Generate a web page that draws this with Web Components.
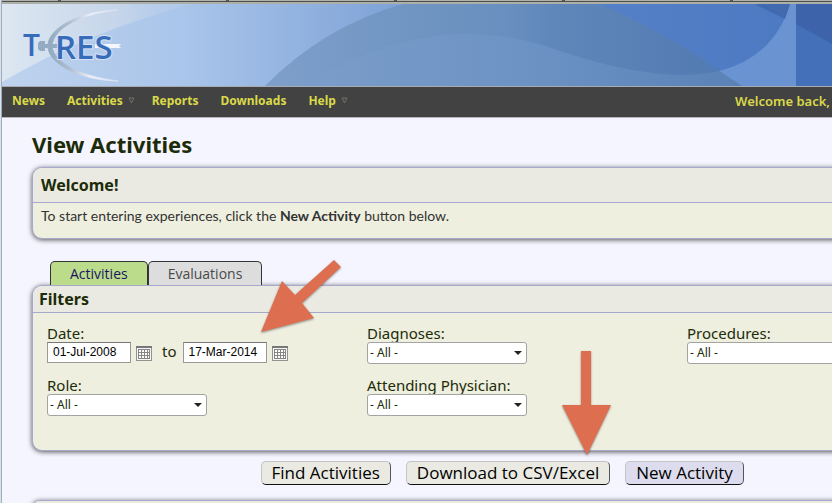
<!DOCTYPE html>
<html lang="en">
<head>
<meta charset="utf-8">
<title>View Activities</title>
<style>
  body {
    margin: 0;
    min-height: 100vh;
    overflow: hidden;
    background: #f4f5ff;
    color: #1c2b08;
    font-family: "Noto Sans", "Open Sans", sans-serif;
  }
</style>
</head>
<body>
<activities-page></activities-page>

<script type="module">
class TeresBanner extends HTMLElement {
  constructor() {
    super();
    this.attachShadow({ mode: 'open' });
    this.shadowRoot.innerHTML = `
      <style>
        :host {
          display: block;
          border-bottom: 1px solid #a9abb2;
        }
        .ticks {
          height: 1px;
          background: repeating-linear-gradient(90deg, #b0b1ab 0 56px, #555 56px 59px, #b0b1ab 59px 168px);
        }
        .edge {
          height: 2px;
          border-top: 1px solid #4d504c;
          background: #adb0a9;
        }
        svg { display: block; width: 100%; height: 82px; }
      </style>
      <div class="ticks"></div>
      <div class="edge"></div>
      <svg viewBox="0 0 832 82" preserveAspectRatio="xMinYMin slice" role="img" aria-label="TERES">
        <defs>
          <linearGradient id="sky">
            <stop offset="0" stop-color="#bfd3ee"/>
            <stop offset=".22" stop-color="#a9c5ea"/>
            <stop offset=".42" stop-color="#88aadb"/>
            <stop offset=".68" stop-color="#5a85ca"/>
            <stop offset="1" stop-color="#426fbb"/>
          </linearGradient>
          <linearGradient id="pale">
            <stop offset="0" stop-color="#dce7f1"/>
            <stop offset=".6" stop-color="#c6d5ea"/>
            <stop offset="1" stop-color="#abc6ea"/>
          </linearGradient>
          <linearGradient id="hill">
            <stop offset="0" stop-color="#7e9fca"/>
            <stop offset=".5" stop-color="#688fbe"/>
            <stop offset=".6" stop-color="#6087ba"/>
            <stop offset="1" stop-color="#5079b2"/>
          </linearGradient>
          <linearGradient id="dome">
            <stop offset="0" stop-color="#7b9dc9"/>
            <stop offset=".5" stop-color="#6d93c4"/>
            <stop offset="1" stop-color="#5a82b7"/>
          </linearGradient>
          <linearGradient id="arc">
            <stop offset="0" stop-color="#8fa9bf"/>
            <stop offset=".3" stop-color="#acbdd1"/>
            <stop offset=".6" stop-color="#e9edf7"/>
            <stop offset="1" stop-color="#d5dff1"/>
          </linearGradient>
        </defs>
        <rect width="832" height="82" fill="url(#sky)"/>
        <path d="M0 0H190Q85 28 0 78Z" fill="url(#pale)"/>
        <path d="M263 82Q322 22 401 0H597Q658 24 742 82Z" fill="url(#hill)"/>
        <path d="M300 82Q380 34 457 30Q510 29 555 46Q625 70 680 71Q702 70 717 67L740 82Z" fill="url(#dome)"/>
        <path d="M597 0H790Q772 53 717 67Q658 24 597 0Z" fill="#527fc4" opacity=".6"/>
        <path d="M717 67Q772 53 788 0H794V82H740Z" fill="#6994d1"/>
        <path d="M752 0H788L783 15Z" fill="#426aae"/>
        <path d="M794 0H832V82H794Z" fill="#4470b9"/>
        <path d="M794 0H832V41L794 20Z" fill="#3d64ab"/>
        <path d="M116 6C78 7 46 24 46 42C46 60 78 76 116 77C82 73 51 60 50 42C51 23 82 9 116 6Z" fill="url(#arc)" stroke="url(#arc)"/>
        <path d="M38 37h5v10h-5l-2-2v-6zM43 40h13v4H43z" fill="#94abc4"/>
        <path d="M93 40H119L117 42L119 44H93Z" fill="#f5f7fd"/>
        <g fill="#376cb9" stroke="#d5e0f5" stroke-width="2" paint-order="stroke" font-family="Open Sans, Noto Sans, sans-serif" font-weight="600">
          <text x="21" y="52" font-size="30">T</text>
          <text x="53" y="55" font-size="33">RES</text>
        </g>
      </svg>
    `;
  }
}
customElements.define('teres-banner', TeresBanner);

class TeresNav extends HTMLElement {
  constructor() {
    super();
    this.attachShadow({ mode: 'open' });
    this.shadowRoot.innerHTML = `
      <style>
        :host {
          display: block;
          background: #424242;
          border-bottom: 1px solid #b6b4bf;
        }
        nav {
          display: flex;
          align-items: center;
          height: 30px;
          padding: 0 2px 3px 10px;
          box-sizing: border-box;
          font-size: 12px;
          font-weight: 700;
          color: #d9d94a;
        }
        ul {
          display: flex;
          gap: 22px;
          margin: 0;
          padding: 0;
          list-style: none;
        }
        li { display: flex; align-items: center; gap: 5px; }
        a { color: inherit; text-decoration: none; }
        svg { width: 7px; height: 7px; margin-right: -5px; }
        .user { margin-left: auto; font-size: 13px; font-weight: 600; }
      </style>
      <nav>
        <ul>
          <li><a href="#news">News</a></li>
          <li><a href="#activities">Activities</a>${TeresNav.more}</li>
          <li><a href="#reports">Reports</a></li>
          <li><a href="#downloads">Downloads</a></li>
          <li><a href="#help">Help</a>${TeresNav.more}</li>
        </ul>
        <span class="user">Welcome back,</span>
      </nav>
    `;
  }

  static more = `<svg viewBox="0 0 7 7" aria-hidden="true">
    <path d="M1 1H6L3.500 6Z" fill="none" stroke="#77706b"/>
  </svg>`;
}
customElements.define('teres-nav', TeresNav);

class InfoPanel extends HTMLElement {
  constructor() {
    super();
    this.attachShadow({ mode: 'open' });
    this.shadowRoot.innerHTML = `
      <style>
        :host {
          display: block;
          border: 1px solid #a6a8cc;
          border-radius: 10px;
          background: #eeefdf;
          box-shadow: 0 1px 5px #555;
          overflow: hidden;
        }
        header {
          padding: var(--panel-head-padding, 6px 8px);
          border-bottom: 1px solid #a6a8cc;
          background: #eaeae2;
          font-size: 16px;
          line-height: 22px;
          font-weight: 700;
        }
        ::slotted(h2) { margin: 0; font: inherit; }
      </style>
      <header><slot name="title"></slot></header>
      <slot></slot>
    `;
  }
}
customElements.define('info-panel', InfoPanel);

class TabStrip extends HTMLElement {
  constructor() {
    super();
    this.attachShadow({ mode: 'open' });
    this.shadowRoot.innerHTML = `
      <style>
        :host { display: flex; }
        ::slotted(button) {
          height: 24px;
          padding: 0 19px;
          border: 1px solid #333;
          border-bottom: 0;
          border-radius: 5px 5px 0 0;
          background: #ddd;
          color: #4a4a4a;
          font: 14px/22px "Open Sans", sans-serif;
        }
        ::slotted(button[aria-selected="true"]) {
          background: #badc8b;
          color: #1b1465;
        }
      </style>
      <slot></slot>
    `;
  }

  connectedCallback() {
    this.setAttribute('role', 'tablist');
  }
}
customElements.define('tab-strip', TabStrip);

class SelectField extends HTMLElement {
  constructor() {
    super();
    this.attachShadow({ mode: 'open' });
    this.shadowRoot.innerHTML = `
      <style>
        :host { display: block; }
        label { display: block; font-size: 15px; line-height: 18px; }
        .box { position: relative; width: 160px; }
        select {
          display: block;
          appearance: none;
          box-sizing: border-box;
          width: 100%;
          height: 22px;
          padding: 0 20px 1px 2px;
          border: 1px solid #a3a3a3;
          border-radius: 3px;
          background: #fff;
          color: #1c2b08;
          font: 12px "Noto Sans", sans-serif;
        }
        svg {
          position: absolute;
          right: 5px;
          top: 9px;
          width: 8px;
          height: 4px;
          pointer-events: none;
        }
      </style>
      <label for="choice"></label>
      <div class="box">
        <select id="choice"><option>- All -</option></select>
        <svg viewBox="0 0 8 4" aria-hidden="true"><path d="M0 0H8L4 4Z" fill="#222"/></svg>
      </div>
    `;
  }

  connectedCallback() {
    this.shadowRoot.querySelector('label').textContent = this.getAttribute('label');
  }
}
customElements.define('select-field', SelectField);

class DateRange extends HTMLElement {
  constructor() {
    super();
    this.attachShadow({ mode: 'open' });
    const calendar = `<svg viewBox="0 0 16 15" aria-hidden="true">
      <rect x=".5" y=".5" width="15" height="14" fill="#f6f6f3" stroke="#92928e"/>
      <path d="M0 1H16" stroke="#777" stroke-width="2"/>
      <rect x="2" y="3" width="12" height="10" fill="#858585"/>
      <path d="M3 4h2v2h-2zM6 4h2v2h-2zM9 4h2v2h-2zM12 4h1v2h-1zM3 7h2v2h-2zM6 7h2v2h-2zM9 7h2v2h-2zM12 7h1v2h-1zM3 10h2v2h-2zM6 10h2v2h-2zM9 10h2v2h-2zM12 10h1v2h-1z" fill="#fff"/>
    </svg>`;
    this.shadowRoot.innerHTML = `
      <style>
        :host { display: block; }
        label { display: block; font-size: 15px; line-height: 18px; }
        .range { display: flex; align-items: flex-start; height: 22px; }
        input {
          box-sizing: border-box;
          width: 84px;
          height: 21px;
          padding: 0 5px 1px;
          border: 1px solid #999;
          border-top-color: #777;
          background: #fff;
          color: #000;
          font: 12px "Liberation Sans", Arial, sans-serif;
        }
        button {
          display: flex;
          margin: 4px 0 0 5px;
          padding: 0;
          border: 0;
          background: none;
        }
        svg { width: 16px; height: 15px; }
        .to { margin: 0 6px 0 10px; }
      </style>
      <label for="from">Date:</label>
      <div class="range">
        <input id="from" value="01-Jul-2008">
        <button type="button" aria-label="Pick start date">${calendar}</button>
        <label class="to" for="until">to</label>
        <input id="until" value="17-Mar-2014">
        <button type="button" aria-label="Pick end date">${calendar}</button>
      </div>
    `;
  }
}
customElements.define('date-range', DateRange);

class ActionBar extends HTMLElement {
  constructor() {
    super();
    this.attachShadow({ mode: 'open' });
    this.shadowRoot.innerHTML = `
      <style>
        :host { display: flex; justify-content: center; gap: 15px; }
        ::slotted(button) {
          height: 24px;
          padding: 0 10px;
          border: 1px solid;
          border-color: #c4c4c4 #555 #111 #c4c4c4;
          border-radius: 5px;
          background: #eaeae2;
          color: #000;
          font: 17px/20px "Open Sans", sans-serif;
        }
        ::slotted(button.primary) { background: #dddcee; }
      </style>
      <slot></slot>
    `;
  }
}
customElements.define('action-bar', ActionBar);

class CalloutArrow extends HTMLElement {
  constructor() {
    super();
    this.attachShadow({ mode: 'open' });
    this.shadowRoot.innerHTML = `
      <style>
        :host { display: block; position: absolute; pointer-events: none; }
        svg { display: block; overflow: visible; filter: drop-shadow(0 1px 1px #0006); }
      </style>
      <svg aria-hidden="true"><path fill="#de6e50"/></svg>
    `;
  }

  connectedCallback() {
    const svg = this.shadowRoot.querySelector('svg');
    svg.setAttribute('width', this.getAttribute('width'));
    svg.setAttribute('height', this.getAttribute('height'));
    svg.querySelector('path').setAttribute('d', this.getAttribute('d'));
  }
}
customElements.define('callout-arrow', CalloutArrow);

class ActivitiesPage extends HTMLElement {
  constructor() {
    super();
    this.attachShadow({ mode: 'open' });
    this.shadowRoot.innerHTML = `
      <style>
        :host {
          display: block;
          position: relative;
          box-sizing: border-box;
          min-height: 100vh;
          border-left: 1px solid #d4e1ef;
        }
        .frame { border-left: 1px solid #a5adba; }
        /* the content is wider than the window and runs off its right edge */
        main { width: 121%; box-sizing: border-box; padding: 12px 34px 0 30px; }
        h1 { margin: 0 0 9px; font-size: 22px; line-height: 28px; }
        p {
          margin: 0;
          padding: 3px 8px 12px;
          font: 14px/20px Lato, "Open Sans", sans-serif;
          color: #333;
        }
        tab-strip { margin: 22px 0 0 18px; }
        .filters { --panel-head-padding: 2px 6px; }
        .fields {
          display: grid;
          grid-template-columns: repeat(3, 320px);
          gap: 12px 0;
          padding: 11px 14px 34px;
        }
        action-bar { margin: 10px 0 15px; }
        .dates { left: 259px; top: 260px; }
        .export { left: 561px; top: 351px; }
      </style>
      <div class="frame">
        <teres-banner></teres-banner>
        <teres-nav></teres-nav>
        <main>
          <h1>View Activities</h1>
          <info-panel>
            <h2 slot="title">Welcome!</h2>
            <p>To start entering experiences, click the <b>New Activity</b> button below.</p>
          </info-panel>
          <tab-strip>
            <button type="button" role="tab" aria-selected="true">Activities</button>
            <button type="button" role="tab" aria-selected="false">Evaluations</button>
          </tab-strip>
          <info-panel class="filters">
            <h2 slot="title">Filters</h2>
            <div class="fields">
              <date-range></date-range>
              <select-field label="Diagnoses:"></select-field>
              <select-field label="Procedures:"></select-field>
              <select-field label="Role:"></select-field>
              <select-field label="Attending Physician:"></select-field>
            </div>
          </info-panel>
          <action-bar>
            <button type="button">Find Activities</button>
            <button type="button">Download to CSV/Excel</button>
            <button type="button" class="primary">New Activity</button>
          </action-bar>
          <info-panel></info-panel>
        </main>
      </div>
      <callout-arrow class="dates" width="82" height="72" d="M74 0L81 7L42 43L54 58L1 72L22 21L35 35Z"></callout-arrow>
      <callout-arrow class="export" width="50" height="104" d="M19 0H29V54H49L25 104L0 54H19Z"></callout-arrow>
    `;
  }
}
customElements.define('activities-page', ActivitiesPage);
</script>
</body>
</html>
